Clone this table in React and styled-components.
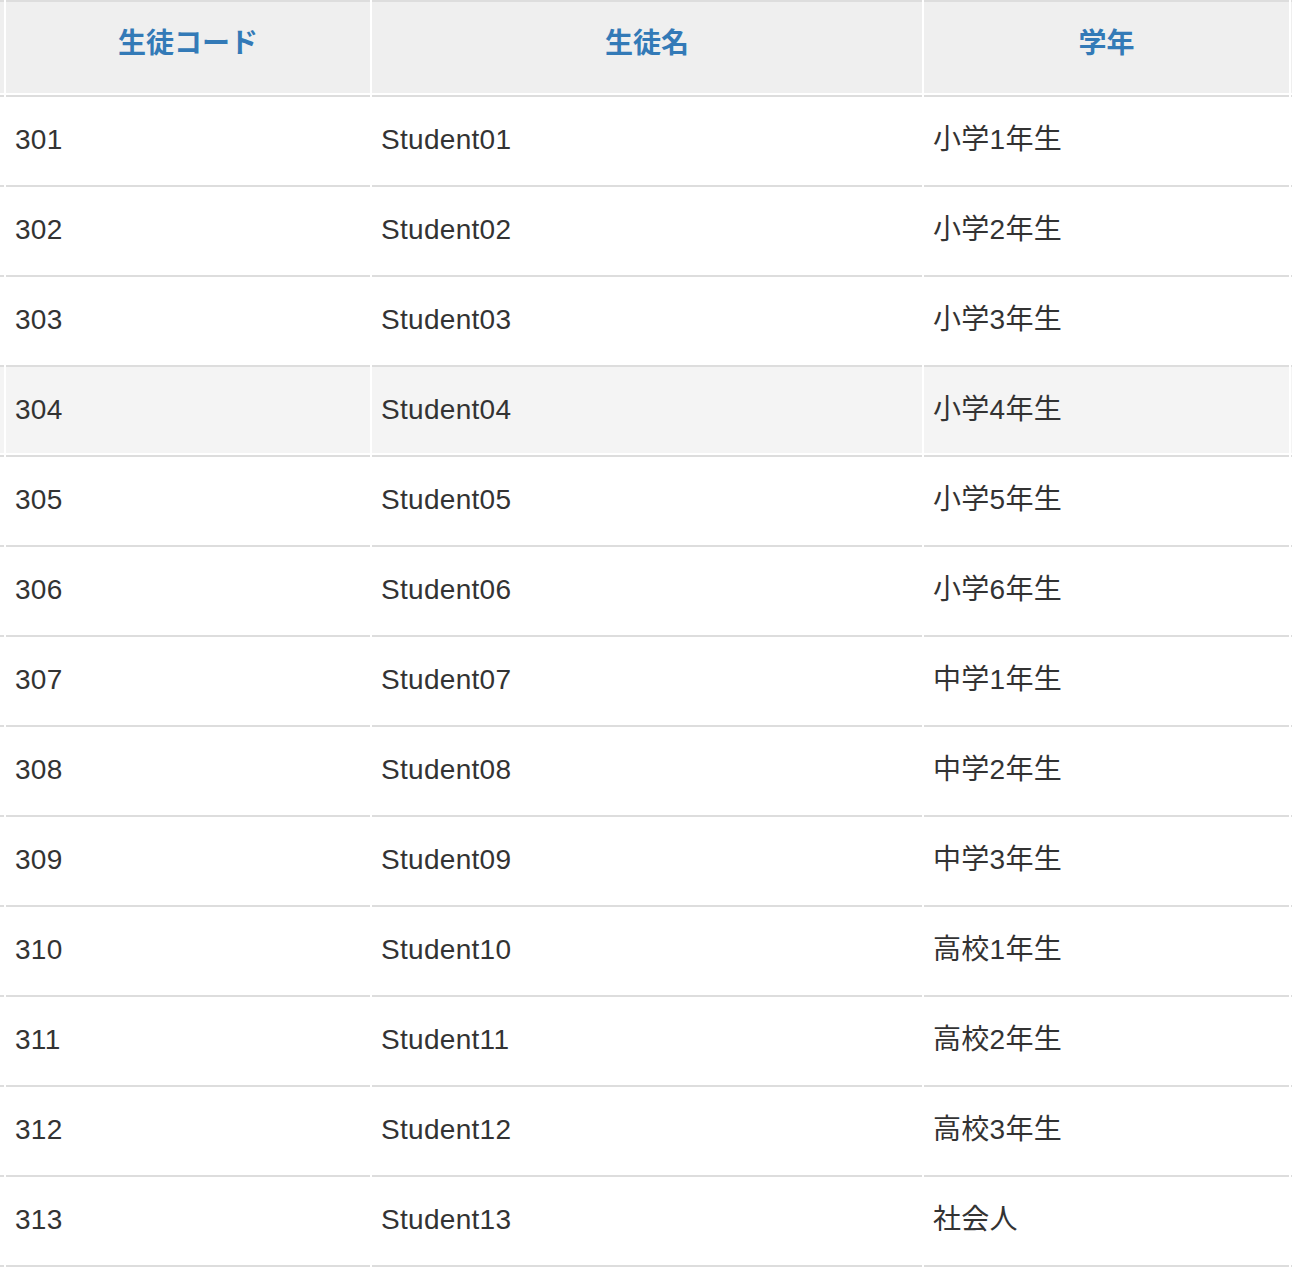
import React from "react";
import styled, { createGlobalStyle } from "styled-components";

const GlobalStyle = createGlobalStyle`
  html, body {
    margin: 0;
    padding: 0;
    background: #ffffff;
  }
  body {
    font-family: "Liberation Sans", "Noto Sans CJK JP", Arial, sans-serif;
    color: #333333;
  }
`;

const Grid = styled.div`
  display: grid;
  grid-template-columns: 4px 364px 550px 365px 1fr;
  column-gap: 2px;
  row-gap: 2px;
  width: 1292px;
  overflow: hidden;
`;

const HeadCell = styled.div`
  border-top: 2px solid #dddddd;
  background: #efefef;
  padding: 22px 8px 29px;
  line-height: 40px;
  height: 40px;
  font-size: 28px;
  font-weight: 700;
  color: #337ab7;
  text-align: center;
  white-space: nowrap;
  font-family: "Liberation Sans", "Noto Sans CJK JP", sans-serif;
`;

const Cell = styled.div`
  border-top: 2px solid #dddddd;
  background: ${(p) => (p.$highlight ? "#f4f4f4" : "#ffffff")};
  padding: 23px 8px 23px 9px;
  line-height: 40px;
  height: 40px;
  font-size: 28px;
  letter-spacing: 0.3px;
  color: #333333;
  white-space: nowrap;
  overflow: hidden;
  font-family: "Liberation Sans", "Noto Sans CJK JP", sans-serif;
`;

const EdgeCell = styled.div`
  border-top: 2px solid #dddddd;
  background: ${(p) => (p.$head ? "#efefef" : p.$highlight ? "#f4f4f4" : "#ffffff")};
`;

const FootCell = styled.div`
  border-top: 2px solid #dddddd;
  height: 0;
`;

const students = [
  ["301", "Student01", "小学1年生"],
  ["302", "Student02", "小学2年生"],
  ["303", "Student03", "小学3年生"],
  ["304", "Student04", "小学4年生"],
  ["305", "Student05", "小学5年生"],
  ["306", "Student06", "小学6年生"],
  ["307", "Student07", "中学1年生"],
  ["308", "Student08", "中学2年生"],
  ["309", "Student09", "中学3年生"],
  ["310", "Student10", "高校1年生"],
  ["311", "Student11", "高校2年生"],
  ["312", "Student12", "高校3年生"],
  ["313", "Student13", "社会人"],
];

export default function App() {
  return (
    <>
      <GlobalStyle />
      <Grid role="table">
        <EdgeCell $head />
        <HeadCell>生徒コード</HeadCell>
        <HeadCell>生徒名</HeadCell>
        <HeadCell>学年</HeadCell>
        <EdgeCell $head />
        {students.map(([code, name, grade]) => {
          const hl = code === "304";
          return (
            <React.Fragment key={code}>
              <EdgeCell $highlight={hl} />
              <Cell $highlight={hl}>{code}</Cell>
              <Cell $highlight={hl}>{name}</Cell>
              <Cell $highlight={hl}>{grade}</Cell>
              <EdgeCell $highlight={hl} />
            </React.Fragment>
          );
        })}
        <FootCell />
        <FootCell />
        <FootCell />
        <FootCell />
        <FootCell />
      </Grid>
    </>
  );
}
